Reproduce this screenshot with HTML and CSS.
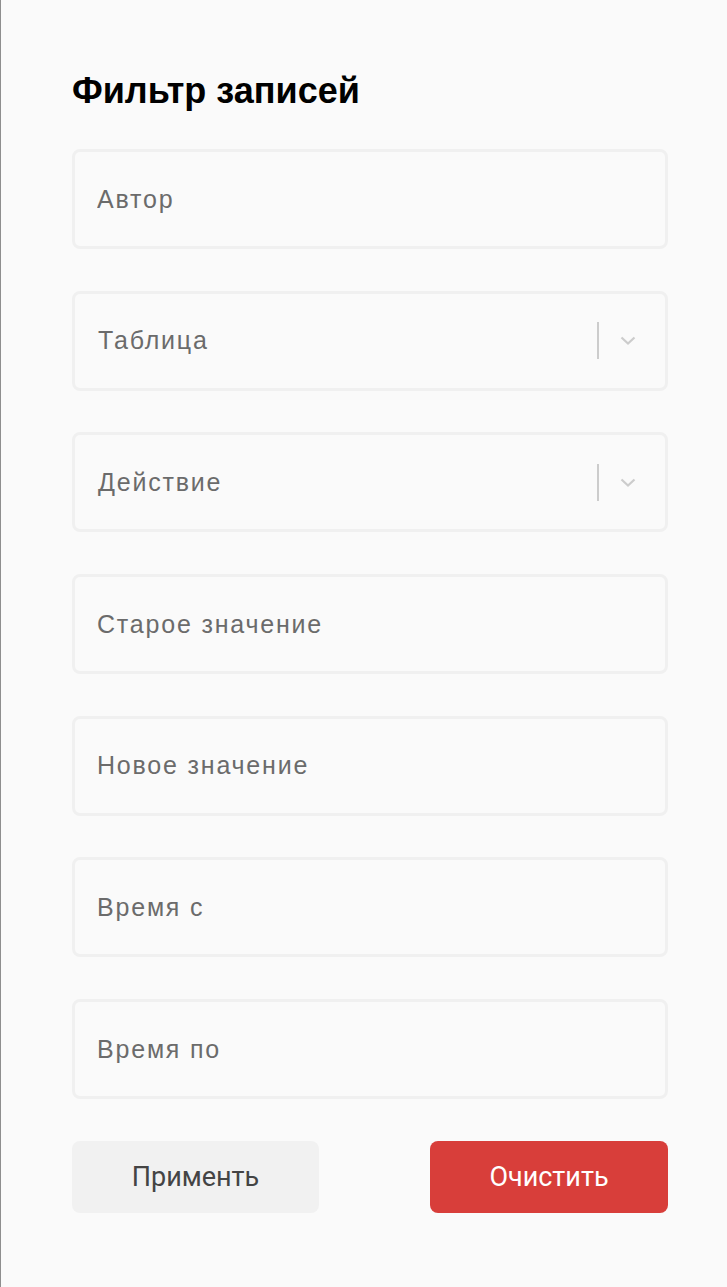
FILE: index.html
```html
<!DOCTYPE html>
<html lang="ru">
<head>
    <meta charset="UTF-8">
    <meta name="viewport" content="width=device-width, initial-scale=1.0">
    <title>Фильтр записей</title>
    <link rel="stylesheet" href="styles.css">
</head>
<body>
    <div class="panel">
        <h2 class="title">Фильтр записей</h2>
        <form class="filter" name="f1">
            <input type="text" class="field" placeholder="Автор">
            <div class="field select">
                <span class="placeholder">Таблица</span>
                <span class="sep"></span>
                <svg class="chevron" width="16" height="10" viewBox="0 0 16 10"><path d="M1.5 1.5 L8 7.5 L14.5 1.5" fill="none" stroke="#cccccc" stroke-width="2.2"/></svg>
            </div>
            <div class="field select">
                <span class="placeholder">Действие</span>
                <span class="sep"></span>
                <svg class="chevron" width="16" height="10" viewBox="0 0 16 10"><path d="M1.5 1.5 L8 7.5 L14.5 1.5" fill="none" stroke="#cccccc" stroke-width="2.2"/></svg>
            </div>
            <input type="text" class="field" placeholder="Старое значение">
            <input type="text" class="field" placeholder="Новое значение">
            <input type="text" class="field" placeholder="Время с">
            <input type="text" class="field" placeholder="Время по">
            <div class="buttons">
                <button type="button" class="btn apply">Применть</button>
                <button type="button" class="btn clear">Очистить</button>
            </div>
        </form>
    </div>
</body>
</html>
```

FILE: styles.css
```css
body{
    margin: 0;
    background-color: #fafafa;
    border-left: 1px solid #8e8e8e;
    min-height: 1287px;
    box-sizing: border-box;
}
.panel{
    padding: 70px 59px 0 71px;
}
.title{
    font-family: "Liberation Sans", Arial, sans-serif;
    font-size: 36px;
    font-weight: bold;
    color: #000;
    margin: 0 0 37px 0;
    line-height: 42px;
}
.filter{
    display: flex;
    flex-direction: column;
    gap: 41.7px;
}
.field{
    box-sizing: border-box;
    width: 596px;
    height: 100px;
    border: 3px solid #f0f0f0;
    border-radius: 8px;
    background-color: #fafafa;
    padding: 0 22px;
    font-family: "Liberation Sans", Arial, sans-serif;
    font-size: 25px;
    letter-spacing: 1.8px;
    color: #333;
    outline: none;
}
.field::placeholder{
    color: #6b6b6b;
}
.select{
    display: flex;
    align-items: center;
    padding-right: 29px;
}
.placeholder{
    flex: 1;
    color: #6b6b6b;
    padding-left: 1px;
}
.sep{
    width: 2px;
    height: 37px;
    background-color: #cccccc;
    margin-right: 21px;
}
.chevron{
    display: block;
    margin-top: 1px;
}
.buttons{
    display: flex;
    justify-content: space-between;
}
.btn{
    height: 72px;
    border: 0;
    border-radius: 8px;
    font-family: Roboto, "Liberation Sans", sans-serif;
    font-size: 27px;
    cursor: pointer;
}
.apply{
    width: 247px;
    background-color: #f1f1f1;
    color: #444;
}
.clear{
    width: 238px;
    background-color: #d83e3a;
    color: #fff;
}
```
